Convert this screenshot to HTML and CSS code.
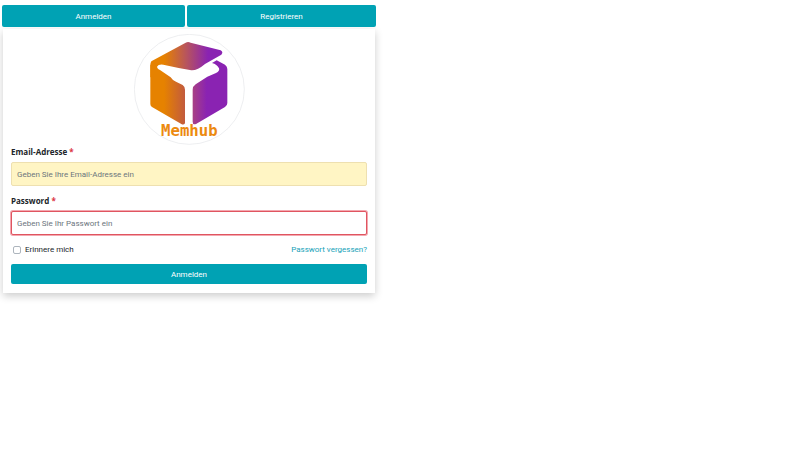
FILE: index.html
```html
<!DOCTYPE html>
<html lang="de">
<head>
<meta charset="utf-8">
<meta name="viewport" content="width=device-width, initial-scale=1">
<title>Memhub</title>
<link rel="stylesheet" href="styles.css">
</head>
<body>
<main class="panel">
  <nav class="tabs">
    <button class="btn" type="button">Anmelden</button>
    <button class="btn" type="button">Registrieren</button>
  </nav>
  <form class="card">
    <svg class="logo" viewBox="0 0 333 333" role="img" aria-label="Memhub">
      <defs>
        <linearGradient id="cube-top" gradientUnits="userSpaceOnUse" x1="90" y1="0" x2="222" y2="0">
          <stop offset="0" stop-color="#e68200"/>
          <stop offset="0.5" stop-color="#b8555c"/>
          <stop offset="1" stop-color="#8a23b2"/>
        </linearGradient>
        <linearGradient id="cube-left" gradientUnits="userSpaceOnUse" x1="90" y1="0" x2="170" y2="0">
          <stop offset="0" stop-color="#e68200"/>
          <stop offset="1" stop-color="#b8504f"/>
        </linearGradient>
        <linearGradient id="cube-right" gradientUnits="userSpaceOnUse" x1="165" y1="0" x2="218" y2="0">
          <stop offset="0" stop-color="#b04878"/>
          <stop offset="1" stop-color="#8a23b2"/>
        </linearGradient>
      </defs>
      <circle cx="166" cy="166" r="165" fill="#fff" stroke="#e4e6e8" stroke-width="2"/>
      <path fill="url(#cube-top)" d="M52 82 L155 26 Q162 22 170 26 L260 49 Q269 54 262 62 L213 90 Q190 110 172 109 L134 102 L88 92 Q73 90 69 98 L69 130 L49 130 L49 94 Q49 86 52 82Z"/>
      <path fill="url(#cube-left)" d="M49 92 L69 94 Q68 105 78 108 L110 130 Q116 140 126 143 L146 153 Q153 158 153 167 L153 268 Q149 274 142 270 L54 219 Q49 216 49 210Z"/>
      <path fill="url(#cube-right)" d="M234 87 L248 79 L273 92 Q280 97 280 105 L280 207 Q280 215 273 219 L186 270 Q176 274 176 263 L176 167 Q176 157 185 151 L220 128 L246 117 Q258 111 255 103 Q249 91 234 87Z"/>
      <text class="logo-name" x="166" y="306" text-anchor="middle">Memhub</text>
    </svg>
    <label class="caption" for="email">Email-Adresse <span class="required">*</span></label>
    <input class="field field-filled" id="email" type="email" placeholder="Geben Sie Ihre Email-Adresse ein">
    <label class="caption" for="password">Password <span class="required">*</span></label>
    <input class="field field-invalid" id="password" type="password" placeholder="Geben Sie Ihr Passwort ein">
    <div class="options">
      <label class="remember"><input class="check" type="checkbox">Erinnere mich</label>
      <a class="link" href="#">Passwort vergessen?</a>
    </div>
    <button class="btn submit" type="submit">Anmelden</button>
  </form>
</main>
</body>
</html>
```
FILE: styles.css
```css
* {
  box-sizing: border-box;
}

body {
  min-height: 100vh;
  margin: 0;
  background: #fff;
  color: #212529;
  font: 8px/12px Roboto, "Open Sans", sans-serif;
}

.panel {
  width: 47%;
  padding: 5px 0 12px 2px;
}

.tabs {
  display: grid;
  grid-template-columns: 183fr 189fr;
  gap: 2px;
}

.btn {
  height: 22px;
  padding: 1px 0 0;
  border: 0;
  border-radius: 2px;
  background: #00a2b4;
  color: #fff;
  font: inherit;
}

.card {
  display: flex;
  flex-direction: column;
  margin: 2px 1px 0;
  padding: 5px 8px 9px;
  background: #fff;
  box-shadow: 0 3px 8px rgba(0, 0, 0, 0.2);
}

.logo {
  width: 111px;
  height: 111px;
  margin-bottom: 1px;
  align-self: center;
}

.logo-name {
  fill: #ec8a10;
  font: bold 47px "DejaVu Sans Mono", monospace;
}

.caption {
  margin-bottom: 4px;
  font-family: "Open Sans", sans-serif;
  font-weight: 700;
}

.required {
  color: #dc3545;
}

.field {
  width: 100%;
  height: 24px;
  margin-bottom: 9px;
  padding: 0 5px;
  border: 1px solid #ced4da;
  border-radius: 2px;
  outline: 0;
  color: #495057;
  font: inherit;
}

.field::placeholder {
  color: #6c757d;
  opacity: 1;
}

.field-filled {
  border-color: #eee0b0;
  background: #fff5c4;
}

.field-invalid {
  border-color: #e05560;
  box-shadow: 0 0 0 1px #f3a8b0;
}

.options {
  display: flex;
  align-items: center;
  justify-content: space-between;
  margin-bottom: 8px;
}

.remember {
  display: flex;
  align-items: center;
  gap: 4px;
  padding-left: 2px;
}

.check {
  width: 8px;
  height: 8px;
  margin: 0;
  appearance: none;
  border: 1px solid #adb5bd;
  border-radius: 2px;
  background: #fff;
}

.link {
  color: #17a2b8;
  text-decoration: none;
}

.submit {
  height: 20px;
}
```
